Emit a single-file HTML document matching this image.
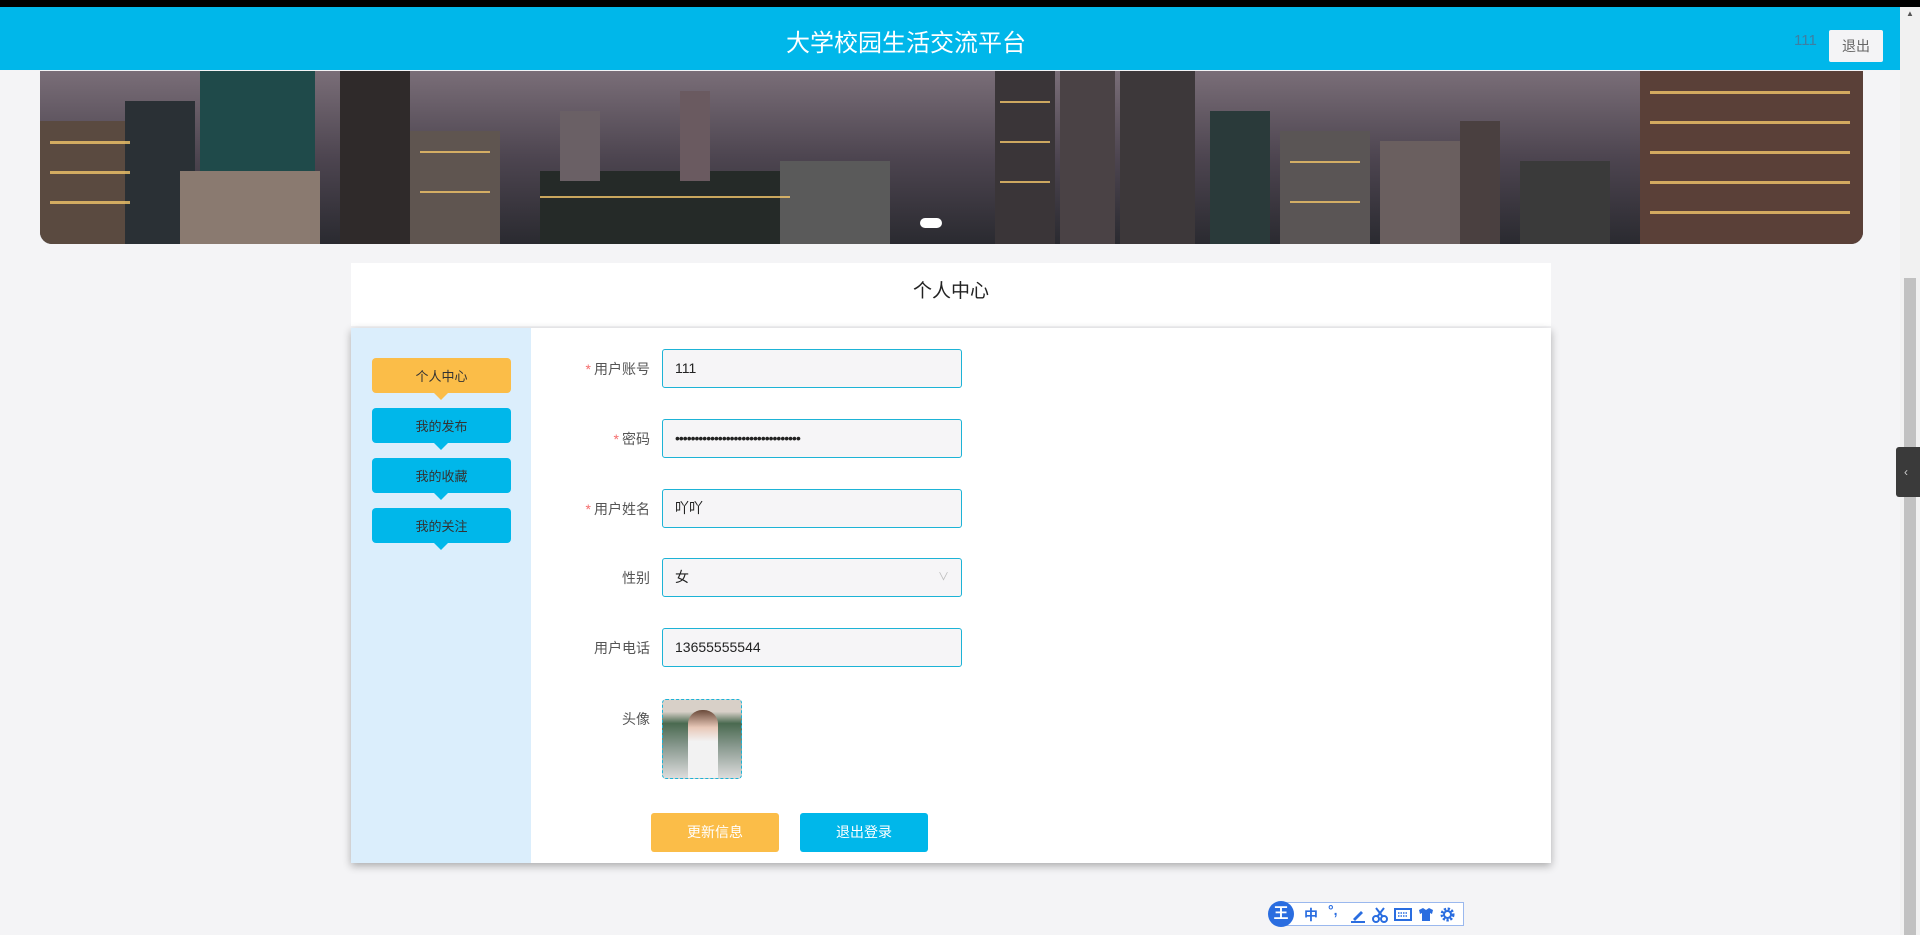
<!DOCTYPE html>
<html><head><meta charset="utf-8"><style>
*{margin:0;padding:0;box-sizing:border-box}
body{width:1920px;height:935px;overflow:hidden;background:#f4f4f6;font-family:"Liberation Sans","Noto Sans CJK SC",sans-serif;position:relative}
.abs{position:absolute}
#top{left:0;top:0;width:1920px;height:7px;background:#000}
#hdr{left:0;top:7px;width:1900px;height:63px;background:#00b7ea}
#title{left:0;width:1812px;top:16px;text-align:center;color:#fff;font-size:24px}
#uname{left:1794px;top:25px;color:#3d7fa3;font-size:15px}
#out{left:1829px;top:23px;width:54px;height:32px;background:#f4f4f6;color:#666;font-size:14px;text-align:center;line-height:32px;border-radius:2px}
#sb{left:1900px;top:7px;width:20px;height:928px;background:#f1f1f1}
#thumb{left:1904px;top:278px;width:12px;height:657px;background:#c1c1c1}
#tab{left:1896px;top:447px;width:24px;height:50px;background:#3a3a3a;border-radius:3px 0 0 3px;color:#ccc;font-size:12px;line-height:50px;padding-left:8px}
#ban{left:40px;top:71px;width:1823px;height:173px;border-radius:0 0 12px 12px;overflow:hidden}
#tbox{left:351px;top:263px;width:1200px;height:63px;background:#fff;text-align:center;font-size:19px;line-height:58px;color:#222}
#panel{left:351px;top:328px;width:1200px;height:535px;background:#fff;box-shadow:0 3px 8px rgba(0,0,0,.3)}
#side{left:0;top:0;width:180px;height:535px;background:#dbeefc}
.sbtn{position:absolute;left:21px;width:139px;height:35px;border-radius:4px;color:#333;font-size:13px;text-align:center;line-height:37px}
.sbtn:after{content:"";position:absolute;left:62px;bottom:-7px;border:7px solid transparent;border-bottom:0;border-top-color:inherit}
.y{background:#fbbd48;border-color:#fbbd48}.b{background:#00b7ea;border-color:#00b7ea}
.lab{position:absolute;right:1270px;font-size:14px;color:#555;text-align:right;white-space:nowrap}
.lab i{color:#f56c6c;font-style:normal;margin-right:3px}
.inp{position:absolute;left:662px;width:300px;height:39px;border:1px solid #1db3d6;border-radius:3px;background:#f6f5f7;font-size:14px;color:#222;line-height:37px;padding-left:12px}
.btn{position:absolute;top:813px;width:128px;height:39px;border-radius:3px;color:#fff;font-size:14px;text-align:center;line-height:39px}
#ime{left:1268px;top:900px;width:196px;height:28px}
#ime span{position:absolute;top:5px;color:#2a6de0;font-size:14px;font-weight:bold}
</style></head><body>
<div class="abs" id="top"></div>
<div class="abs" id="hdr"><div class="abs" id="title">大学校园生活交流平台</div><div class="abs" id="uname">111</div><div class="abs" id="out">退出</div></div>
<div class="abs" id="ban"><svg width="1823" height="173">
<defs><linearGradient id="sky" x1="0" y1="0" x2="0" y2="1"><stop offset="0" stop-color="#7a6e78"/><stop offset=".5" stop-color="#4d4550"/><stop offset="1" stop-color="#2a2a30"/></linearGradient></defs>
<rect width="1823" height="173" fill="url(#sky)"/>
<rect x="0" y="50" width="100" height="123" fill="#5a4a40"/>
<rect x="85" y="30" width="70" height="143" fill="#2a3035"/>
<rect x="160" y="0" width="115" height="173" fill="#1f4a4a"/>
<rect x="140" y="100" width="140" height="73" fill="#8a7a70"/>
<rect x="300" y="0" width="70" height="173" fill="#2f2a2a"/>
<rect x="370" y="60" width="90" height="113" fill="#5f5550"/>
<rect x="500" y="100" width="250" height="73" fill="#252a28"/>
<rect x="520" y="40" width="40" height="70" fill="#6a6065"/>
<rect x="640" y="20" width="30" height="90" fill="#6a5a60"/>
<rect x="740" y="90" width="110" height="83" fill="#5a5a5a"/>
<rect x="955" y="0" width="60" height="173" fill="#3a3538"/>
<rect x="1020" y="0" width="55" height="173" fill="#4a4245"/>
<rect x="1080" y="0" width="75" height="173" fill="#3d383a"/>
<rect x="1170" y="40" width="60" height="133" fill="#2a3a3a"/>
<rect x="1240" y="60" width="90" height="113" fill="#5a5555"/>
<rect x="1340" y="70" width="90" height="103" fill="#6a5f5f"/>
<rect x="1420" y="50" width="40" height="123" fill="#4a4040"/>
<rect x="1480" y="90" width="90" height="83" fill="#3a3a3a"/>
<rect x="1600" y="0" width="223" height="173" fill="#5a4038"/>
<g fill="#f2c56a" opacity=".8">
<rect x="10" y="70" width="80" height="3"/><rect x="10" y="100" width="80" height="3"/><rect x="10" y="130" width="80" height="3"/>
<rect x="1610" y="20" width="200" height="3"/><rect x="1610" y="50" width="200" height="3"/><rect x="1610" y="80" width="200" height="3"/><rect x="1610" y="110" width="200" height="3"/><rect x="1610" y="140" width="200" height="3"/>
<rect x="380" y="80" width="70" height="2"/><rect x="380" y="120" width="70" height="2"/>
<rect x="500" y="125" width="250" height="2"/><rect x="1250" y="90" width="70" height="2"/><rect x="1250" y="130" width="70" height="2"/>
<rect x="960" y="30" width="50" height="2"/><rect x="960" y="70" width="50" height="2"/><rect x="960" y="110" width="50" height="2"/>
</g>
<rect x="880" y="147" width="22" height="10" rx="5" fill="#fff"/>
</svg></div>
<div class="abs" id="tbox">个人中心</div>
<div class="abs" id="panel"><div class="abs" id="side">
<div class="sbtn y" style="top:30px">个人中心</div>
<div class="sbtn b" style="top:80px">我的发布</div>
<div class="sbtn b" style="top:130px">我的收藏</div>
<div class="sbtn b" style="top:180px">我的关注</div>
</div></div>
<div class="lab" style="top:359px"><i>*</i>用户账号</div><div class="inp" style="top:349px">111</div>
<div class="lab" style="top:429px"><i>*</i>密码</div><div class="inp" style="top:419px;letter-spacing:-1px">••••••••••••••••••••••••••••••••</div>
<div class="lab" style="top:499px"><i>*</i>用户姓名</div><div class="inp" style="top:489px">吖吖</div>
<div class="lab" style="top:568px">性别</div><div class="inp" style="top:558px">女<span style="position:absolute;right:12px;color:#bbb;font-size:11px">∨</span></div>
<div class="lab" style="top:638px">用户电话</div><div class="inp" style="top:628px">13655555544</div>
<div class="lab" style="top:709px">头像</div>
<div class="abs" style="left:662px;top:699px;width:80px;height:80px;border:1px dashed #1db3d6;border-radius:4px;overflow:hidden;background:linear-gradient(#d8d0c8 0,#d8d0c8 15%,#4a6a50 30%,#8a9a90 60%,#dcdcdc 100%)"><div class="abs" style="left:25px;top:10px;width:30px;height:70px;border-radius:14px 14px 0 0;background:linear-gradient(#6a4a3a 0,#e8c8b8 25%,#f2f2f2 45%,#f2f2f2 100%)"></div></div>
<div class="btn" style="left:651px;background:#fbbd48">更新信息</div>
<div class="btn" style="left:800px;background:#00b7ea">退出登录</div>
<div class="abs" id="sb"><div style="text-align:center;font-size:8px;color:#555;margin-top:2px">▲</div></div>
<div class="abs" id="thumb"></div>
<div class="abs" id="tab">‹</div>
<div class="abs" id="ime"><div class="abs" style="left:8px;top:2px;width:188px;height:24px;border:1px solid #9ab8ee;background:#fff"></div>
<div class="abs" style="left:0;top:1px;width:26px;height:26px;border-radius:13px;background:#2a6de0;color:#fff;font-size:15px;font-weight:bold;text-align:center;line-height:26px">王</div>
<span style="left:36px">中</span>
<span style="left:60px;top:2px">°,</span>
<svg class="abs" style="left:82px;top:7px" width="16" height="16"><path d="M3 12 L11 4 L13 6 L5 14 Z" fill="#2a6de0"/><rect x="1" y="14" width="14" height="2" fill="#2a6de0"/></svg>
<svg class="abs" style="left:104px;top:7px" width="16" height="16"><circle cx="4" cy="12" r="3" fill="none" stroke="#2a6de0" stroke-width="2"/><circle cx="12" cy="12" r="3" fill="none" stroke="#2a6de0" stroke-width="2"/><path d="M5 10 L12 1 M11 10 L4 1" stroke="#2a6de0" stroke-width="2"/></svg>
<svg class="abs" style="left:126px;top:8px" width="18" height="13"><rect x="1" y="1" width="16" height="11" fill="none" stroke="#2a6de0" stroke-width="2"/><path d="M4 5h10M4 8h10" stroke="#2a6de0" stroke-width="1.5" stroke-dasharray="1.5 1"/></svg>
<svg class="abs" style="left:150px;top:7px" width="16" height="15"><path d="M1 3 L5 1 L8 3 L11 1 L15 3 L14 7 L12 6 L12 14 L4 14 L4 6 L2 7 Z" fill="#2a6de0"/></svg>
<svg class="abs" style="left:172px;top:7px" width="15" height="15"><circle cx="7.5" cy="7.5" r="5.5" fill="none" stroke="#2a6de0" stroke-width="3" stroke-dasharray="2.2 1.5"/><circle cx="7.5" cy="7.5" r="3.5" fill="none" stroke="#2a6de0" stroke-width="2"/></svg>
</div>
</body></html>
